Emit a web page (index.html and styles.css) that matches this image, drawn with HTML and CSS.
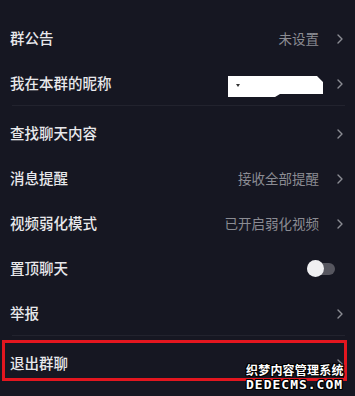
FILE: index.html
```html
<!DOCTYPE html>
<html lang="zh-CN">
<head>
<meta charset="utf-8">
<link rel="stylesheet" href="styles.css">
</head>
<body>
<div class="list">
  <div class="row">
    <span class="label">群公告</span>
    <span class="value">未设置</span>
    <svg class="chev" width="6" height="10" viewBox="0 0 6 10"><path d="M1 1l4 4-4 4" /></svg>
  </div>
  <div class="row">
    <span class="label">我在本群的昵称</span>
    <svg class="blob" width="98" height="24" viewBox="0 0 98 24"><path d="M0 1H89L95 7V19H52L47 22H0Z" fill="#fff"/><path d="M8 9h4l-2 3z" fill="#333"/></svg>
    <svg class="chev" width="6" height="10" viewBox="0 0 6 10"><path d="M1 1l4 4-4 4" /></svg>
  </div>
  <div class="divider"></div>
  <div class="row">
    <span class="label">查找聊天内容</span>
    <svg class="chev" width="6" height="10" viewBox="0 0 6 10"><path d="M1 1l4 4-4 4" /></svg>
  </div>
  <div class="row">
    <span class="label">消息提醒</span>
    <span class="value">接收全部提醒</span>
    <svg class="chev" width="6" height="10" viewBox="0 0 6 10"><path d="M1 1l4 4-4 4" /></svg>
  </div>
  <div class="row">
    <span class="label">视频弱化模式</span>
    <span class="value">已开启弱化视频</span>
    <svg class="chev" width="6" height="10" viewBox="0 0 6 10"><path d="M1 1l4 4-4 4" /></svg>
  </div>
  <div class="row">
    <span class="label">置顶聊天</span>
    <span class="toggle"><span class="knob"></span></span>
  </div>
  <div class="row">
    <span class="label">举报</span>
    <svg class="chev" width="6" height="10" viewBox="0 0 6 10"><path d="M1 1l4 4-4 4" /></svg>
  </div>
  <div class="divider"></div>
  <div class="row exit">
    <span class="label">退出群聊</span>
    <svg class="chev" width="6" height="10" viewBox="0 0 6 10"><path d="M1 1l4 4-4 4" /></svg>
    <div class="highlight"></div>
    <div class="watermark">
      <div class="wm-cn">织梦内容管理系统</div>
      <div class="wm-en">DEDECMS.COM</div>
    </div>
  </div>
</div>
</body>
</html>
```

FILE: styles.css
```css
html, body {
  margin: 0;
  padding: 0;
  background: #161722;
  width: 355px;
  height: 396px;
  overflow: hidden;
}
body {
  font-family: "Noto Sans CJK SC", "Noto Sans", sans-serif;
}
.list {
  padding-top: 16px;
  display: flex;
  flex-direction: column;
}
.row {
  height: 45px;
  display: flex;
  align-items: center;
  padding: 0 12px 0 10px;
  position: relative;
}
.label {
  flex: 1;
  color: #e8e8eb;
  font-size: 14.5px;
  font-weight: 500;
  line-height: 1;
}
.value {
  color: #8b8c93;
  font-size: 13.5px;
  line-height: 1;
  margin-right: 18px;
}
.chev {
  display: block;
}
.chev path {
  fill: none;
  stroke: #8b8c93;
  stroke-width: 1.4;
  stroke-linecap: round;
  stroke-linejoin: round;
}
.blob {
  display: block;
  margin-right: 11px;
  margin-top: 7px;
}
.divider {
  height: 5px;
  margin: -1px 10px 0 12px;
  border-top: 1px solid #22232e;
}
.toggle {
  position: relative;
  width: 28px;
  height: 12px;
  border-radius: 6px;
  background: #56565f;
  margin-right: 8px;
}
.knob {
  position: absolute;
  left: 0;
  top: -3px;
  width: 17px;
  height: 17px;
  border-radius: 50%;
  background: #f0f0f2;
}
.highlight {
  position: absolute;
  left: 2px;
  right: 8px;
  top: -1px;
  height: 41px;
  border: 3px solid #e3161f;
  box-sizing: border-box;
}
.watermark {
  position: absolute;
  left: 246px;
  top: 21px;
  width: 100px;
  color: #fff;
  font-weight: bold;
  text-shadow: 1px 0 0 #000, -1px 0 0 #000, 0 1px 0 #000, 0 -1px 0 #000, 1px 1px 0 #000, -1px -1px 0 #000, 1px -1px 0 #000, -1px 1px 0 #000;
}
.wm-cn {
  font-size: 12px;
  line-height: 16px;
  letter-spacing: 0.2px;
  white-space: nowrap;
}
.wm-en {
  font-family: "DejaVu Sans Mono", monospace;
  font-size: 13px;
  line-height: 13px;
  letter-spacing: 1px;
  white-space: nowrap;
}
```
